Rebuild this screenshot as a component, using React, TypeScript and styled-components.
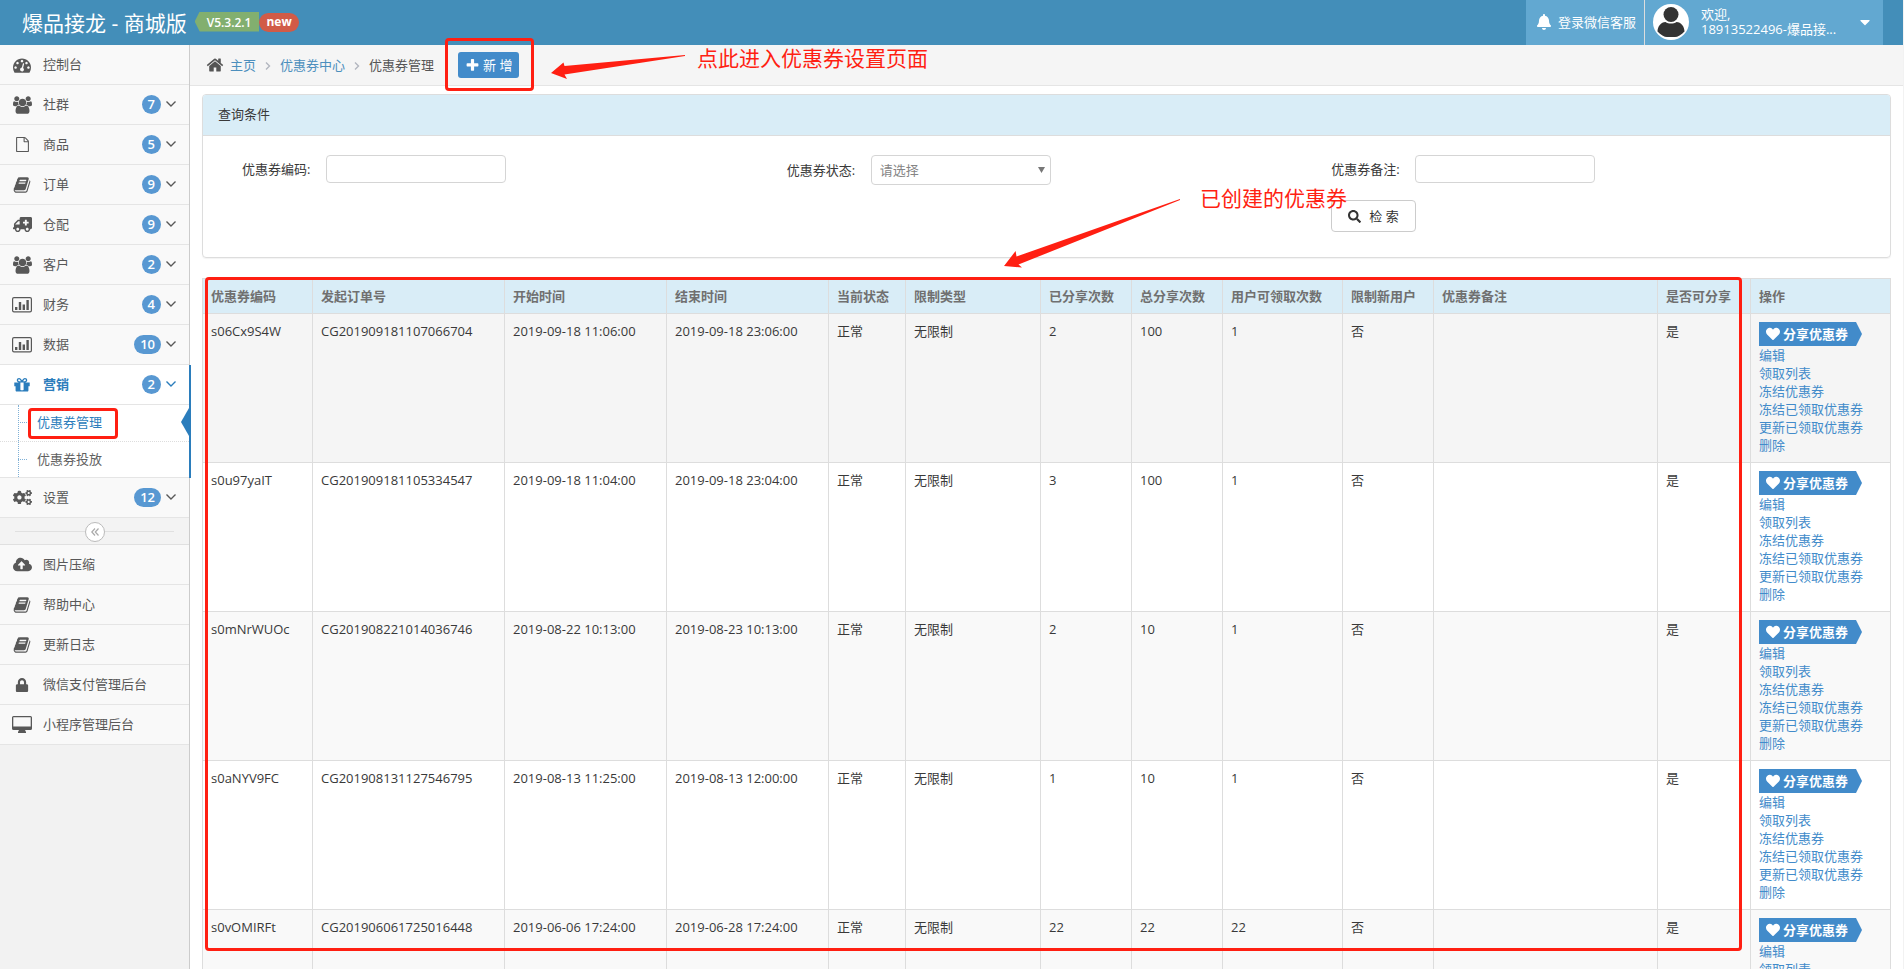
import React from "react";
import styled, { createGlobalStyle, css } from "styled-components";
import {
  FaAmbulance,
  FaBell,
  FaCaretDown,
  FaCloudUploadAlt,
  FaCogs,
  FaHeart,
  FaLock,
  FaSearch,
} from "react-icons/fa";

const GlobalStyle = createGlobalStyle`
  *, *::before, *::after { box-sizing: border-box; }
  body {
    margin: 0;
    background: #fff;
    color: #393939;
    font: 13px/18px "Open Sans", "Noto Sans", "Noto Sans CJK SC", sans-serif;
  }
  button, input, select { font: inherit; }
  a { color: #428bca; text-decoration: none; }
  ul { list-style: none; margin: 0; padding: 0; }
`;

/* ---------- icons ---------- */

const Glyph = ({ d, w = 1792, size = 16 }: { d: string; w?: number; size?: number }) => (
  <svg viewBox={`0 0 ${w} 1792`} height={size} width={Math.round((size * w) / 1792)} fill="currentColor" aria-hidden="true">
    <path d={d} />
  </svg>
);

const HOME =
  "M1472 992v480q0 26-19 45t-45 19h-384v-384h-256v384h-384q-26 0-45-19t-19-45v-480q0-1 .5-3t.5-3l575-474 575 474q1 2 1 6zm223-69l-62 74q-8 9-21 11h-3q-13 0-21-7l-692-577-692 577q-12 8-24 7-13-2-21-11l-62-74q-8-10-7-23.5t11-21.5l719-599q32-26 76-26t76 26l244 204v-195q0-14 9-23t23-9h192q14 0 23 9t9 23v408l219 182q10 8 11 21.5t-7 23.5z";
const PLUS =
  "M1600 736v192q0 40-28 68t-68 28h-416v416q0 40-28 68t-68 28h-192q-40 0-68-28t-28-68v-416h-416q-40 0-68-28t-28-68v-192q0-40 28-68t68-28h416v-416q0-40 28-68t68-28h192q40 0 68 28t28 68v416h416q40 0 68 28t28 68z";
const GAUGE =
  "M384 1152q0-53-37.5-90.5t-90.5-37.5-90.5 37.5-37.5 90.5 37.5 90.5 90.5 37.5 90.5-37.5 37.5-90.5zm192-448q0-53-37.5-90.5t-90.5-37.5-90.5 37.5-37.5 90.5 37.5 90.5 90.5 37.5 90.5-37.5 37.5-90.5zm428 481l101-382q6-26-7.5-48.5t-38.5-29.5-48 6.5-30 39.5l-101 382q-60 5-107 43.5t-63 98.5q-20 77 20 146t117 89 146-20 89-117q16-60-6-117t-72-91zm660-33q0-53-37.5-90.5t-90.5-37.5-90.5 37.5-37.5 90.5 37.5 90.5 90.5 37.5 90.5-37.5 37.5-90.5zm-640-640q0-53-37.5-90.5t-90.5-37.5-90.5 37.5-37.5 90.5 37.5 90.5 90.5 37.5 90.5-37.5 37.5-90.5zm448 192q0-53-37.5-90.5t-90.5-37.5-90.5 37.5-37.5 90.5 37.5 90.5 90.5 37.5 90.5-37.5 37.5-90.5zm320 448q0 261-141 483-19 29-54 29h-1402q-35 0-54-29-141-221-141-483 0-182 71-348t191-286 286-191 348-71 348 71 286 191 191 286 71 348z";
const USERS =
  "M593 896q-162 5-265 128h-134q-82 0-138-40.5t-56-118.5q0-353 124-353 6 0 43.5 21t97.5 42.5 119 21.5q67 0 133-23-5 37-5 66 0 139 81 256zm1071 637q0 120-73 189.5t-194 69.5h-874q-121 0-194-69.5t-73-189.5q0-53 3.5-103.5t14-109 26.5-108.5 43-97.5 62-81 85.5-53.5 111.5-20q10 0 43 21.5t73 48 107 48 135 21.5 135-21.5 107-48 73-48 43-21.5q61 0 111.5 20t85.5 53.5 62 81 43 97.5 26.5 108.5 14 109 3.5 103.5zm-1024-1277q0 106-75 181t-181 75-181-75-75-181 75-181 181-75 181 75 75 181zm704 384q0 159-112.5 271.5t-271.5 112.5-271.5-112.5-112.5-271.5 112.5-271.5 271.5-112.5 271.5 112.5 112.5 271.5zm576 225q0 78-56 118.5t-138 40.5h-134q-103-123-265-128 81-117 81-256 0-29-5-66 66 23 133 23 59 0 119-21.5t97.5-42.5 43.5-21q124 0 124 353zm-128-609q0 106-75 181t-181 75-181-75-75-181 75-181 181-75 181 75 75 181z";
const FILE =
  "M1596 380q28 28 48 76t20 88v1152q0 40-28 68t-68 28h-1344q-40 0-68-28t-28-68v-1600q0-40 28-68t68-28h896q40 0 88 20t76 48zm-444-244v376h376q-10-29-22-41l-313-313q-12-12-41-22zm384 1528v-1024h-416q-40 0-68-28t-28-68v-416h-768v1536h1280z";
const BOOK =
  "M1703 478q40 57 18 129l-275 906q-19 64-76.5 107.5t-122.5 43.5h-923q-77 0-148.5-53.5t-99.5-131.5q-24-67-2-127 0-4 3-27t4-37q1-8-3-21.5t-3-19.5q2-11 8-21t16.5-23.5 16.5-23.5q23-38 45-91.5t30-91.5q3-10 .5-30t-.5-28q3-11 17-28t17-23q21-36 42-92t25-90q1-9-2.5-32t.5-28q4-13 22-30.5t22-22.5q19-26 42.5-84.5t27.5-96.5q1-8-3-25.5t-2-26.5q2-8 9-18t18-23 17-21q8-12 16.5-30.5t15-35 16-36 19.5-32 26.5-23.5 36-11.5 47.5 5.5l-1 3q38-9 51-9h761q74 0 114 56t18 130l-274 906q-36 119-71.5 153.5t-128.5 34.5h-869q-27 0-38 15-11 16-1 43 24 70 144 70h923q29 0 56-15.5t35-41.5l300-987q7-22 5-57 38 15 59 43zm-1064 2q-4 13 2 22.5t20 9.5h608q13 0 25.5-9.5t16.5-22.5l21-64q4-13-2-22.5t-20-9.5h-608q-13 0-25.5 9.5t-16.5 22.5zm-83 256q-4 13 2 22.5t20 9.5h608q13 0 25.5-9.5t16.5-22.5l21-64q4-13-2-22.5t-20-9.5h-608q-13 0-25.5 9.5t-16.5 22.5z";
const GIFT =
  "M1056 1356v-716h-320v716q0 25 18 38.5t46 13.5h192q28 0 46-13.5t18-38.5zm-456-844h195l-126-161q-26-31-69-31-40 0-68 28t-28 68 28 68 68 28zm688-96q0-40-28-68t-68-28q-43 0-69 31l-125 161h194q40 0 68-28t28-68zm376 256v320q0 14-9 23t-23 9h-96v416q0 40-28 68t-68 28h-1088q-40 0-68-28t-28-68v-416h-96q-14 0-23-9t-9-23v-320q0-14 9-23t23-9h440q-93 0-158.5-65.5t-65.5-158.5 65.5-158.5 158.5-65.5q107 0 168 77l128 165 128-165q61-77 168-77 93 0 158.5 65.5t65.5 158.5-65.5 158.5-158.5 65.5h440q14 0 23 9t9 23z";

const ChartIcon = () => (
  <svg width="20" height="16" viewBox="0 0 20 16" fill="currentColor" aria-hidden="true">
    <rect x="0.6" y="0.6" width="18.8" height="14.2" rx="1.4" fill="none" stroke="currentColor" strokeWidth="1.2" />
    <path d="M3 10h2.4v3H3zM6.800 5h2.400v8H6.800zM10.600 7.500H13V13h-2.400zM14.400 3h2.400v10h-2.400z" />
  </svg>
);

const DesktopIcon = () => (
  <svg width="20" height="17" viewBox="0 0 20 17" fill="currentColor" aria-hidden="true">
    <path fillRule="evenodd" d="M1.500 0h17A1.500 1.500 0 0 1 20 1.500v11a1.500 1.500 0 0 1-1.500 1.500H13l1 2v1H6v-1l1-2H1.500A1.500 1.500 0 0 1 0 12.500v-11A1.500 1.500 0 0 1 1.500 0zM1.300 1.300v9.200h17.400V1.300z" />
  </svg>
);

const Chevron = () => (
  <svg width="10" height="6" viewBox="0 0 10 6" fill="none" stroke="currentColor" strokeWidth="1.4" aria-hidden="true">
    <path d="M0.500 0.500 5 5 9.500 0.500" />
  </svg>
);

const Flip = styled.span`
  display: flex;
  transform: scaleX(-1);
`;

/* ---------- shell ---------- */

const Shell = styled.div`
  display: flex;
  flex-direction: column;
  height: 100vh;
  overflow-y: auto;
  overflow-x: hidden;
  scrollbar-width: none;
  border-right: 1px solid #f2f2f2;
`;

const TopBar = styled.header`
  display: flex;
  flex: none;
  height: 45px;
  padding: 0 20px 0 22px;
  align-items: center;
  background: #438eb9;
  color: #fff;
`;

const Brand = styled.h1`
  margin: 0 8px 0 0;
  font-size: 21px;
  line-height: 24px;
  font-weight: 400;
`;

const Version = styled.span`
  height: 20px;
  padding: 0 8px 0 12px;
  margin-bottom: 2px;
  background: #82af6f;
  clip-path: polygon(0 50%, 5px 0, 100% 0, 100% 100%, 5px 100%);
  font-size: 12px;
  line-height: 22px;
  font-weight: 600;
`;

const NewBadge = styled.span`
  height: 19px;
  padding: 0 7px;
  border-radius: 10px;
  background: #d15b47;
  font-size: 12px;
  line-height: 18px;
  font-weight: 700;
`;

const TopNav = styled.nav`
  display: flex;
  margin-left: auto;
  height: 45px;
  background: #62a8d1;
`;

const ServiceLink = styled.a`
  display: flex;
  align-items: center;
  gap: 6px;
  padding: 0 8px 2px 10px;
  border-right: 1px solid #ddd;
  color: #fff;
`;

const UserButton = styled.button`
  display: flex;
  align-items: center;
  width: 238px;
  padding: 0 10px 2px 8px;
  border: 0;
  background: none;
  color: #fff;
  text-align: left;
  line-height: 15px;

  > span {
    flex: 1;
    margin-left: 12px;
    white-space: nowrap;
  }
`;

const Body = styled.div`
  display: flex;
  flex: 1 0 auto;
`;

/* ---------- sidebar ---------- */

const Sidebar = styled.aside`
  flex: none;
  width: 190px;
  background: #f2f2f2;
  border-right: 1px solid #ccc;
`;

const Item = styled.li<{ $active?: boolean }>`
  position: relative;
  ${(p) =>
    p.$active &&
    css`
      background: #fff;
      &::after {
        content: "";
        position: absolute;
        top: 0;
        bottom: 0;
        right: -2px;
        width: 2px;
        background: #2b7dbc;
      }
    `}
`;

const ItemLink = styled.a<{ $active?: boolean }>`
  display: flex;
  align-items: center;
  height: 40px;
  padding: 0 13px 2px 10px;
  border-bottom: 1px solid #e5e5e5;
  background: ${(p) => (p.$active ? "#fff" : "#f9f9f9")};
  color: ${(p) => (p.$active ? "#2b7dbc" : "#585858")};
  font-weight: ${(p) => (p.$active ? 700 : 400)};
`;

const ItemIcon = styled.span`
  display: flex;
  justify-content: center;
  width: 24px;
  margin-right: 9px;
  padding-top: 2px;
`;

const Count = styled.span`
  min-width: 19px;
  height: 19px;
  margin: 1px 5px 0 auto;
  padding: 0 6px;
  border-radius: 10px;
  background: #5898d2;
  color: #fff;
  font-size: 13px;
  line-height: 18px;
  font-weight: 600;
  text-align: center;
`;

const SubList = styled.ul`
  position: relative;
  border-bottom: 1px solid #e5e5e5;

  &::before {
    content: "";
    position: absolute;
    left: 18px;
    top: 0;
    bottom: 0;
    border-left: 1px dotted #7fb0d6;
  }
`;

const SubItem = styled.li<{ $active?: boolean }>`
  position: relative;
  height: 36px;

  & + & {
    border-top: 1px dotted #ddd;
  }
  &::before {
    content: "";
    position: absolute;
    left: 18px;
    top: 17px;
    width: 9px;
    border-top: 1px dotted #7fb0d6;
  }
  ${(p) =>
    p.$active &&
    css`
      &::after {
        content: "";
        position: absolute;
        right: 0;
        top: 3px;
        border: 14px solid transparent;
        border-left: 0;
        border-right: 8px solid #2b7dbc;
      }
    `}
`;

const SubLink = styled.a<{ $active?: boolean }>`
  display: block;
  padding-left: 37px;
  line-height: 34px;
  color: ${(p) => (p.$active ? "#2b7dbc" : "#616161")};
`;

const Collapse = styled.div`
  display: flex;
  align-items: center;
  height: 28px;
  padding: 0 15px;
  border-bottom: 1px solid #e0e0e0;
  background: #f3f3f3;

  &::before,
  &::after {
    content: "";
    flex: 1;
    border-top: 1px solid #e0e0e0;
  }

  & + ul {
    margin-top: -2px;
    border-top: 1px solid #e0e0e0;
  }
`;

const CollapseButton = styled.button`
  display: flex;
  align-items: center;
  justify-content: center;
  width: 20px;
  height: 20px;
  padding: 0;
  border: 1px solid #bbb;
  border-radius: 50%;
  background: #fff;
  color: #aaa;
`;

/* ---------- content ---------- */

const Main = styled.main`
  flex: 1;
  min-width: 0;
`;

const Crumbs = styled.nav`
  display: flex;
  align-items: center;
  height: 41px;
  padding: 0 16px;
  border-bottom: 1px solid #e5e5e5;
  background: #f5f5f5;
  color: #555;

  > svg {
    flex: none;
    margin-right: 6px;
  }
  > a {
    color: #4c8fbd;
  }
`;

const Separator = styled.svg`
  && {
    margin: 2px 9px 0;
  }
`;

const AddArea = styled.div`
  position: relative;
  margin-left: 24px;
`;

const AddButton = styled.button`
  display: flex;
  align-items: center;
  gap: 3px;
  height: 26px;
  padding: 0 7px;
  border: 0;
  border-radius: 3px;
  background: #428bca;
  color: #fff;
  white-space: nowrap;
`;

const Content = styled.div`
  padding: 8px 12px 0 12px;
`;

const Panel = styled.section`
  margin-bottom: 20px;
  border: 1px solid #ddd;
  border-radius: 4px;
  box-shadow: 0 1px 1px rgba(0, 0, 0, 0.05);
`;

const PanelTitle = styled.h2`
  margin: 0;
  padding: 0 15px 1px;
  border-bottom: 1px solid #ddd;
  border-radius: 3px 3px 0 0;
  background: #d9edf7;
  font-size: 13px;
  line-height: 39px;
  font-weight: 400;
`;

const SearchForm = styled.form`
  display: grid;
  grid-template-columns: repeat(3, 1fr);
  gap: 15px 0;
  align-items: start;
  padding: 19px 14px 25px 39px;
`;

const Field = styled.div`
  display: flex;
  align-items: center;

  label {
    width: 84px;
  }
`;

const TextInput = styled.input`
  width: 180px;
  height: 28px;
  border: 1px solid #d5d5d5;
  border-radius: 4px;
  background: #fff;
`;

const SelectWrap = styled.div`
  position: relative;

  svg {
    position: absolute;
    right: 6px;
    top: 12px;
    pointer-events: none;
  }
`;

const Select = styled.select`
  width: 180px;
  height: 30px;
  padding: 0 8px;
  border: 1px solid #d5d5d5;
  border-radius: 4px;
  background: #fff;
  color: #858585;
  appearance: none;
`;

const SearchButton = styled.button`
  grid-column: 3;
  justify-self: start;
  display: flex;
  align-items: center;
  gap: 8px;
  height: 32px;
  padding: 0 16px;
  border: 1px solid #ccc;
  border-radius: 4px;
  background: #fff;
  color: #333;
`;

const TableArea = styled.div`
  position: relative;
`;

const Table = styled.table`
  width: 100%;
  border-collapse: collapse;
  table-layout: fixed;

  th,
  td {
    height: 35px;
    padding: 8px 0 8px 8px;
    border: 1px solid #ddd;
    text-align: left;
    vertical-align: top;
    white-space: nowrap;
  }
  th {
    background: #d9edf7;
    color: #707070;
    font-weight: 700;
  }
`;

const Row = styled.tr`
  &:nth-child(odd) {
    background: #f9f9f9;
  }
  &:first-child {
    background: #f5f5f5;
  }
`;

const Actions = styled.div`
  display: flex;
  flex-direction: column;
  align-items: flex-start;
`;

const ShareTag = styled.a`
  display: flex;
  align-items: center;
  gap: 3px;
  height: 24px;
  padding: 0 14px 1px 7px;
  background: #428bca;
  clip-path: polygon(0 0, calc(100% - 6px) 0, 100% 50%, calc(100% - 6px) 100%, 0 100%);
  color: #fff;
  font-weight: 600;
`;

/* ---------- red guide marks ---------- */

const Mark = styled.div`
  position: absolute;
  border: 3px solid #ff1f12;
  border-radius: 4px;
  pointer-events: none;
`;

const AddMark = styled(Mark)`
  inset: -14px -15px -13px -13px;
`;

const MenuMark = styled(Mark)`
  left: 28px;
  top: 3px;
  width: 90px;
  height: 31px;
`;

const TableMark = styled(Mark)`
  left: 3px;
  right: 149px;
  top: -1px;
  height: 674px;
`;

const Note = styled.div`
  position: absolute;
  display: flex;
  align-items: flex-start;
  color: #ff1f12;
  font-size: 21px;
  line-height: 28px;
  white-space: nowrap;
  pointer-events: none;

  svg {
    flex: none;
  }
`;

const AddNote = styled(Note)`
  left: 92px;
  top: -8px;
  gap: 11px;
`;

const TableNote = styled(Note)`
  left: 802px;
  bottom: 100%;
  margin-bottom: 10px;
  gap: 17px;
`;

/* ---------- data ---------- */

type MenuEntry = { label: string; icon: React.ReactNode; count?: number };

const menuTop: MenuEntry[] = [
  { label: "控制台", icon: <Glyph d={GAUGE} size={18} /> },
  { label: "社群", icon: <Glyph d={USERS} w={1920} size={18} />, count: 7 },
  { label: "商品", icon: <Glyph d={FILE} size={15} />, count: 5 },
  { label: "订单", icon: <Glyph d={BOOK} size={18} />, count: 9 },
  { label: "仓配", icon: <Flip><FaAmbulance size={19} /></Flip>, count: 9 },
  { label: "客户", icon: <Glyph d={USERS} w={1920} size={18} />, count: 2 },
  { label: "财务", icon: <ChartIcon />, count: 4 },
  { label: "数据", icon: <ChartIcon />, count: 10 },
];

const menuBottom: MenuEntry[] = [
  { label: "图片压缩", icon: <FaCloudUploadAlt size={19} /> },
  { label: "帮助中心", icon: <Glyph d={BOOK} size={18} /> },
  { label: "更新日志", icon: <Glyph d={BOOK} size={18} /> },
  { label: "微信支付管理后台", icon: <FaLock size={14} /> },
  { label: "小程序管理后台", icon: <DesktopIcon /> },
];

const columns: [string, number?][] = [
  ["优惠券编码", 110],
  ["发起订单号", 192],
  ["开始时间", 162],
  ["结束时间", 162],
  ["当前状态", 77],
  ["限制类型", 135],
  ["已分享次数", 91],
  ["总分享次数", 91],
  ["用户可领取次数", 120],
  ["限制新用户", 91],
  ["优惠券备注"],
  ["是否可分享", 93],
  ["操作", 140],
];

const coupons = [
  ["s06Cx9S4W", "CG201909181107066704", "2019-09-18 11:06:00", "2019-09-18 23:06:00", "正常", "无限制", "2", "100", "1", "否", "", "是"],
  ["s0u97yaIT", "CG201909181105334547", "2019-09-18 11:04:00", "2019-09-18 23:04:00", "正常", "无限制", "3", "100", "1", "否", "", "是"],
  ["s0mNrWUOc", "CG201908221014036746", "2019-08-22 10:13:00", "2019-08-23 10:13:00", "正常", "无限制", "2", "10", "1", "否", "", "是"],
  ["s0aNYV9FC", "CG201908131127546795", "2019-08-13 11:25:00", "2019-08-13 12:00:00", "正常", "无限制", "1", "10", "1", "否", "", "是"],
  ["s0vOMIRFt", "CG201906061725016448", "2019-06-06 17:24:00", "2019-06-28 17:24:00", "正常", "无限制", "22", "22", "22", "否", "", "是"],
];

const actions = ["编辑", "领取列表", "冻结优惠券", "冻结已领取优惠券", "更新已领取优惠券", "删除"];

const ColWidth = styled.col<{ $w?: number }>`
  width: ${(p) => (p.$w ? `${p.$w}px` : "auto")};
`;

function MenuItem({ label, icon, count, active, children }: MenuEntry & { active?: boolean; children?: React.ReactNode }) {
  return (
    <Item $active={active}>
      <ItemLink href="#" $active={active}>
        <ItemIcon>{icon}</ItemIcon>
        {label}
        {count !== undefined && (
          <>
            <Count>{count}</Count>
            <Chevron />
          </>
        )}
      </ItemLink>
      {children}
    </Item>
  );
}

const CrumbArrow = () => (
  <Separator width="6" height="8" viewBox="0 0 6 8" fill="none" stroke="#b2b6bf" strokeWidth="1.4">
    <path d="M1 0.500 4.500 4 1 7.500" />
  </Separator>
);

export default function App() {
  return (
    <Shell>
      <GlobalStyle />
      <TopBar>
        <Brand>爆品接龙 - 商城版</Brand>
        <Version>V5.3.2.1</Version>
        <NewBadge>new</NewBadge>
        <TopNav>
          <ServiceLink href="#">
            <FaBell size={16} />
            登录微信客服
          </ServiceLink>
          <UserButton type="button">
            <svg width="36" height="36" viewBox="0 0 36 36" aria-hidden="true">
              <circle cx="18" cy="18" r="18" fill="#fff" />
              <circle cx="18" cy="10.500" r="7.500" fill="#333" />
              <path d="M4.500 27.500c0-5 3.500-9.500 8-9.500 3 2 8 2 11 0 4.500 0 8 4.500 8 9.500-3 3.500-7 5.500-9.500 5.500h-8c-2.500 0-6.500-2-9.500-5.500z" fill="#333" />
            </svg>
            <span>
              欢迎,
              <br />
              18913522496-爆品接...
            </span>
            <FaCaretDown size={16} />
          </UserButton>
        </TopNav>
      </TopBar>
      <Body>
        <Sidebar>
          <ul>
            {menuTop.map((m) => (
              <MenuItem key={m.label} {...m} />
            ))}
            <MenuItem label="营销" icon={<Glyph d={GIFT} size={18} />} count={2} active>
              <SubList>
                <SubItem $active>
                  <SubLink href="#" $active>优惠券管理</SubLink>
                  <MenuMark />
                </SubItem>
                <SubItem>
                  <SubLink href="#">优惠券投放</SubLink>
                </SubItem>
              </SubList>
            </MenuItem>
            <MenuItem label="设置" icon={<FaCogs size={19} />} count={12} />
          </ul>
          <Collapse>
            <CollapseButton type="button" aria-label="collapse">
              <svg width="8" height="8" viewBox="0 0 8 8" fill="none" stroke="currentColor" strokeWidth="1.2">
                <path d="M4 0.500 0.800 4 4 7.500M7.500 0.500 4.300 4 7.500 7.500" />
              </svg>
            </CollapseButton>
          </Collapse>
          <ul>
            {menuBottom.map((m) => (
              <MenuItem key={m.label} {...m} />
            ))}
          </ul>
        </Sidebar>
        <Main>
          <Crumbs>
            <Glyph d={HOME} size={18} />
            <a href="#">主页</a>
            <CrumbArrow />
            <a href="#">优惠券中心</a>
            <CrumbArrow />
            <span>优惠券管理</span>
            <AddArea>
              <AddButton type="button">
                <Glyph d={PLUS} size={15} />
                新 增
              </AddButton>
              <AddMark />
              <AddNote>
                <svg width="136" height="36" viewBox="0 0 136 36" fill="#ff1f12">
                  <path d="M1 29 13.500 18.500 14.500 22 135 11v1L14.500 30.500 17 35z" />
                </svg>
                点此进入优惠券设置页面
              </AddNote>
            </AddArea>
          </Crumbs>
          <Content>
            <Panel>
              <PanelTitle>查询条件</PanelTitle>
              <SearchForm>
                <Field>
                  <label htmlFor="code">优惠券编码:</label>
                  <TextInput id="code" type="text" />
                </Field>
                <Field>
                  <label htmlFor="state">优惠券状态:</label>
                  <SelectWrap>
                    <Select id="state" defaultValue="">
                      <option value="">请选择</option>
                    </Select>
                    <svg width="7" height="6" viewBox="0 0 7 6" fill="#777">
                      <path d="M0 0h7L3.500 6z" />
                    </svg>
                  </SelectWrap>
                </Field>
                <Field>
                  <label htmlFor="remark">优惠券备注:</label>
                  <TextInput id="remark" type="text" />
                </Field>
                <SearchButton type="button">
                  <FaSearch size={13} />
                  检 索
                </SearchButton>
              </SearchForm>
            </Panel>
            <TableArea>
              <Table>
                <colgroup>
                  {columns.map(([name, w]) => (
                    <ColWidth key={name} $w={w} />
                  ))}
                </colgroup>
                <thead>
                  <tr>
                    {columns.map(([name]) => (
                      <th key={name} scope="col">{name}</th>
                    ))}
                  </tr>
                </thead>
                <tbody>
                  {coupons.map((c) => (
                    <Row key={c[0]}>
                      {c.map((v, i) => (
                        <td key={i}>{v}</td>
                      ))}
                      <td>
                        <Actions>
                          <ShareTag href="#">
                            <FaHeart size={14} />
                            分享优惠券
                          </ShareTag>
                          {actions.map((a) => (
                            <a key={a} href="#">{a}</a>
                          ))}
                        </Actions>
                      </td>
                    </Row>
                  ))}
                </tbody>
              </Table>
              <TableMark />
              <TableNote>
                <svg width="179" height="84" viewBox="0 0 179 84" fill="#ff1f12">
                  <path d="M0 82 11.600 67 12.500 72.500 176 15v1L14.500 80.500 18 83.500z" />
                </svg>
                已创建的优惠券
              </TableNote>
            </TableArea>
          </Content>
        </Main>
      </Body>
    </Shell>
  );
}
